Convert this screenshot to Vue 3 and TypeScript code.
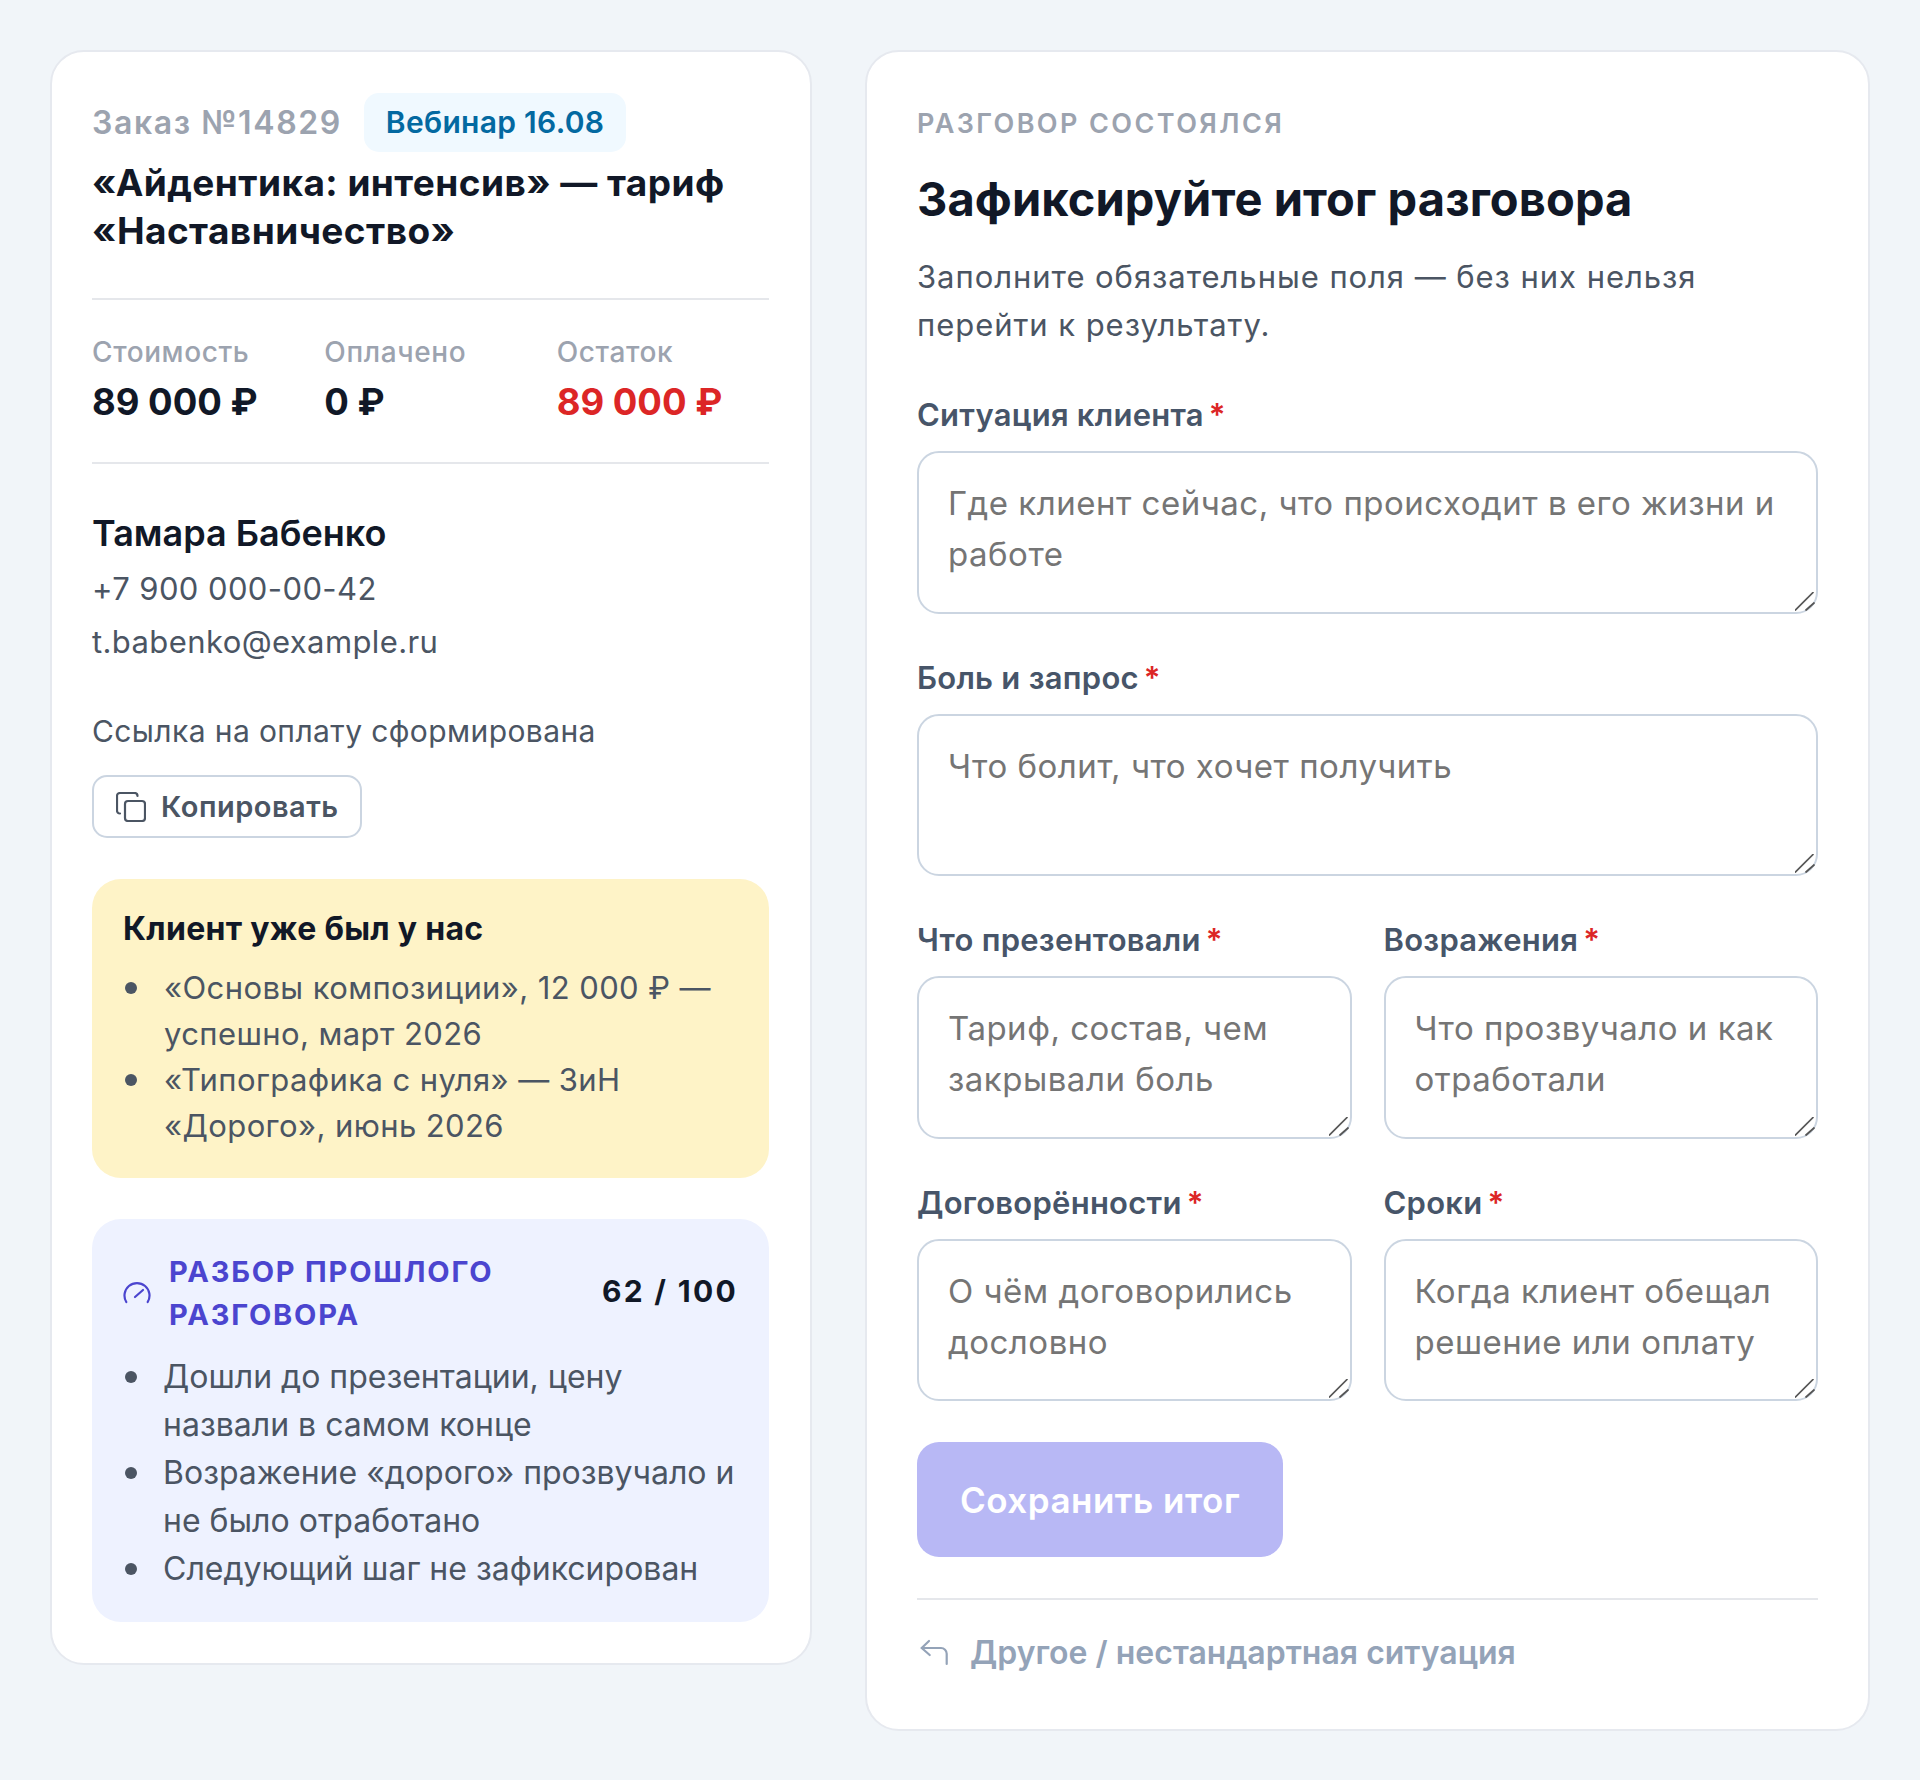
<script setup lang="ts">
const stats = [
  { label: 'Стоимость', value: '89 000 ₽', red: false },
  { label: 'Оплачено', value: '0 ₽', red: false },
  { label: 'Остаток', value: '89 000 ₽', red: true },
]
const history = ['«Основы композиции», 12 000 ₽ — успешно, март 2026', '«Типографика с нуля» — ЗиН «Дорого», июнь 2026']
const review = ['Дошли до презентации, цену назвали в самом конце', 'Возражение «дорого» прозвучало и не было отработано', 'Следующий шаг не зафиксирован']
const pairs = [
  [{ label: 'Что презентовали', ph: 'Тариф, состав, чем закрывали боль' }, { label: 'Возражения', ph: 'Что прозвучало и как отработали' }],
  [{ label: 'Договорённости', ph: 'О чём договорились дословно' }, { label: 'Сроки', ph: 'Когда клиент обещал решение или оплату' }],
]
const singles = [
  { label: 'Ситуация клиента', ph: 'Где клиент сейчас, что происходит в его жизни и работе' },
  { label: 'Боль и запрос', ph: 'Что болит, что хочет получить' },
]
</script>

<template>
  <div class="page">
    <aside class="card left">
      <div class="order-row">
        <span class="order-no">Заказ №14829</span>
        <span class="badge">Вебинар 16.08</span>
      </div>
      <h2 class="product">«Айдентика: интенсив» — тариф «Наставничество»</h2>
      <div class="stats">
        <div v-for="s in stats" :key="s.label">
          <div class="stat-label">{{ s.label }}</div>
          <div class="stat-value" :class="{ red: s.red }">{{ s.value }}</div>
        </div>
      </div>
      <div class="client">
        <div class="client-name">Тамара Бабенко</div>
        <div class="client-line">+7 900 000-00-42</div>
        <div class="client-line">t.babenko@example.ru</div>
      </div>
      <div class="link-note">Ссылка на оплату сформирована</div>
      <button class="copy" type="button">
        <svg class="copy-icon" width="30" height="30" viewBox="0 0 30 30" fill="none" stroke="currentColor" stroke-width="2.2" stroke-linecap="round" stroke-linejoin="round">
          <rect x="9" y="9" width="20" height="20" rx="3" />
          <path d="M4 21.5c-1.8 0-3-1.2-3-3V4c0-1.800 1.200-3 3-3h14.500c1.800 0 3 1.200 3 3" />
        </svg>
        Копировать
      </button>
      <section class="box yellow">
        <div class="yellow-title">Клиент уже был у нас</div>
        <ul class="list">
          <li v-for="h in history" :key="h">{{ h }}</li>
        </ul>
      </section>
      <section class="box blue">
        <div class="review-head">
          <svg class="gauge" width="30" height="30" viewBox="0 0 30 30" fill="none" stroke="currentColor" stroke-width="2.2" stroke-linecap="round">
            <path d="M3.300 21A12.500 12.500 0 1 1 24.700 21" />
            <path d="M12 16l8-7" />
          </svg>
          <div class="review-title">РАЗБОР ПРОШЛОГО РАЗГОВОРА</div>
          <div class="review-score">62 / 100</div>
        </div>
        <ul class="list review-list">
          <li v-for="r in review" :key="r">{{ r }}</li>
        </ul>
      </section>
    </aside>

    <main class="card right">
      <div class="eyebrow">РАЗГОВОР СОСТОЯЛСЯ</div>
      <h1 class="heading">Зафиксируйте итог разговора</h1>
      <p class="lead">Заполните обязательные поля — без них нельзя перейти к результату.</p>
      <div class="form">
        <div v-for="f in singles" :key="f.label" class="field">
          <label class="label">{{ f.label }}<span class="star">*</span></label>
          <div class="ta-wrap">
            <textarea class="ta" rows="2" :placeholder="f.ph"></textarea>
            <svg class="grip" width="20" height="20" viewBox="0 0 20 20" stroke="#555" stroke-width="1.7" stroke-linecap="round"><path d="M0.500 18 18 0.500" /><path d="M11 18l8-7" /></svg>
          </div>
        </div>
        <div v-for="(row, i) in pairs" :key="i" class="pair">
          <div v-for="f in row" :key="f.label" class="field">
            <label class="label">{{ f.label }}<span class="star">*</span></label>
            <div class="ta-wrap">
              <textarea class="ta" rows="2" :placeholder="f.ph"></textarea>
              <svg class="grip" width="20" height="20" viewBox="0 0 20 20" stroke="#555" stroke-width="1.7" stroke-linecap="round"><path d="M0.500 18 18 0.500" /><path d="M11 18l8-7" /></svg>
            </div>
          </div>
        </div>
      </div>
      <button class="save" type="button">Сохранить итог</button>
      <div class="other">
        <svg width="32" height="32" viewBox="0 0 32 32" fill="none" stroke="currentColor" stroke-width="2.2" stroke-linecap="round" stroke-linejoin="round">
          <path d="M12 4 4.700 11l8 7" />
          <path d="M4.700 11H24a5.700 5.700 0 0 1 5.700 5.700V27" />
        </svg>
        <span>Другое / нестандартная ситуация</span>
      </div>
    </main>
  </div>
</template>

<style>
html, body { margin: 0; background: #f1f5f9; }
</style>

<style scoped>
.page {
  display: flex;
  align-items: flex-start;
  gap: 53px;
  box-sizing: border-box;
  width: 1920px;
  min-height: 1780px;
  padding: 50px;
  background: #f1f5f9;
  font-family: Inter, "Noto Sans", sans-serif;
  color: #111827;
}
.card {
  box-sizing: border-box;
  background: #fff;
  border: 2px solid #e6e9ef;
  border-radius: 34px;
}
.left { width: 762px; padding: 41px 41px 41px 40px; }
.right { width: 1005px; padding: 52px 50px 57px 50px; }
.order-row { display: flex; align-items: center; gap: 22px; }
.order-no { font-size: 32px; font-weight: 600; color: #9ca3af; letter-spacing: 1.6px; }
.badge { padding: 0 22px; height: 59px; line-height: 59px; border-radius: 15px; background: #f0f9ff; color: #0369a1; font-size: 30px; font-weight: 600; letter-spacing: 0.3px; }
.product { margin: 7px 0 0; font-size: 37px; line-height: 48px; font-weight: 700; color: #111827; letter-spacing: 0.45px; }
.stats { display: grid; grid-template-columns: repeat(3, 1fr); column-gap: 20px; margin-top: 43px; padding: 32px 0 35px; border-top: 2px solid #e5e7eb; border-bottom: 2px solid #e5e7eb; }
.stat-label { font-size: 28px; line-height: 40px; font-weight: 500; color: #9ca3af; letter-spacing: 0.6px; }
.stat-value { margin-top: 5px; font-size: 36.5px; line-height: 50px; font-weight: 700; color: #111827; }
.red { color: #dc2626; }
.client { margin-top: 45px; }
.client-name { margin-bottom: 5px; font-size: 36px; line-height: 48px; font-weight: 600; color: #111827; }
.client-line { font-size: 31px; line-height: 53px; color: #4b5563; letter-spacing: 0.4px; }
.link-note { margin-top: 40px; font-size: 30px; line-height: 46px; color: #4b5563; letter-spacing: 0.4px; }
.copy { display: flex; align-items: center; gap: 15px; box-sizing: border-box; height: 63px; width: 270px; margin-top: 21px; padding: 0 22px; background: #fff; border: 2px solid #cbd5e1; border-radius: 15px; font-family: inherit; font-size: 29px; font-weight: 600; color: #4b5563; letter-spacing: 0.5px; }
.copy-icon { flex: none; }
.box { border-radius: 29px; padding: 0 31px; }
.yellow { margin-top: 41px; height: 299px; box-sizing: border-box; padding-top: 30px; background: #fef3c7; }
.yellow-title { font-size: 32px; line-height: 40px; font-weight: 700; color: #111827; letter-spacing: 0.3px; }
.list { margin: 16px 0 0; padding: 0; list-style: none; font-size: 31px; line-height: 46px; color: #4b5563; letter-spacing: 0.4px; }
.list li { display: flex; }
.list li::before { content: ""; flex: none; width: 12px; height: 12px; margin: 17px 27px 0 2px; border-radius: 50%; background: #4b5563; }
.blue { margin-top: 41px; padding-top: 31px; padding-bottom: 29px; background: #eef2ff; }
.review-head { display: flex; align-items: center; gap: 16px; }
.gauge { flex: none; margin-top: 6px; color: #4b45cf; }
.review-title { flex: 1; font-size: 29px; line-height: 43px; font-weight: 700; letter-spacing: 1.8px; color: #4b45cf; }
.review-score { margin-bottom: 4px; font-size: 30px; font-weight: 700; letter-spacing: 2.3px; color: #111827; }
.review-list { margin-top: 17px; font-size: 32px; line-height: 48px; letter-spacing: 0; }
.review-list li::before { margin-top: 18px; margin-right: 26px; }
.eyebrow { font-size: 27px; line-height: 40px; font-weight: 600; letter-spacing: 2.4px; color: #9ca3af; }
.heading { margin: 25px 0 0; font-size: 47px; line-height: 60px; font-weight: 700; color: #111827; letter-spacing: 0.1px; }
.lead { margin: 24px 0 0; max-width: 800px; font-size: 31px; line-height: 48px; color: #4b5563; letter-spacing: 0.95px; }
.form { display: flex; flex-direction: column; gap: 44px; margin-top: 46px; }
.pair { display: grid; grid-template-columns: 1fr 1fr; gap: 32px; }
.label { display: block; margin-bottom: 16px; font-size: 31px; line-height: 40px; font-weight: 600; color: #475569; letter-spacing: 0.25px; }
.star { margin-left: 5px; color: #dc2626; }
.ta-wrap { position: relative; height: 162.5px; }
.ta { display: block; box-sizing: border-box; width: 100%; height: 100%; padding: 25px 29px 0; border: 2px solid #cbd5e1; border-radius: 22px; background: #fff; font-family: inherit; font-size: 33px; line-height: 51px; letter-spacing: 0.5px; resize: none; outline: none; }
.grip { position: absolute; right: 3px; bottom: 2px; }
.save { display: block; margin-top: 41px; width: 366px; height: 115px; border: 0; border-radius: 22px; background: #b8b8f5; color: #fff; font-family: inherit; font-size: 35px; font-weight: 600; letter-spacing: 0.5px; }
.other { display: flex; align-items: center; gap: 21px; margin-top: 41px; padding-top: 33px; border-top: 2px solid #e5e7eb; font-size: 32px; font-weight: 600; color: #94a3b8; }
</style>
